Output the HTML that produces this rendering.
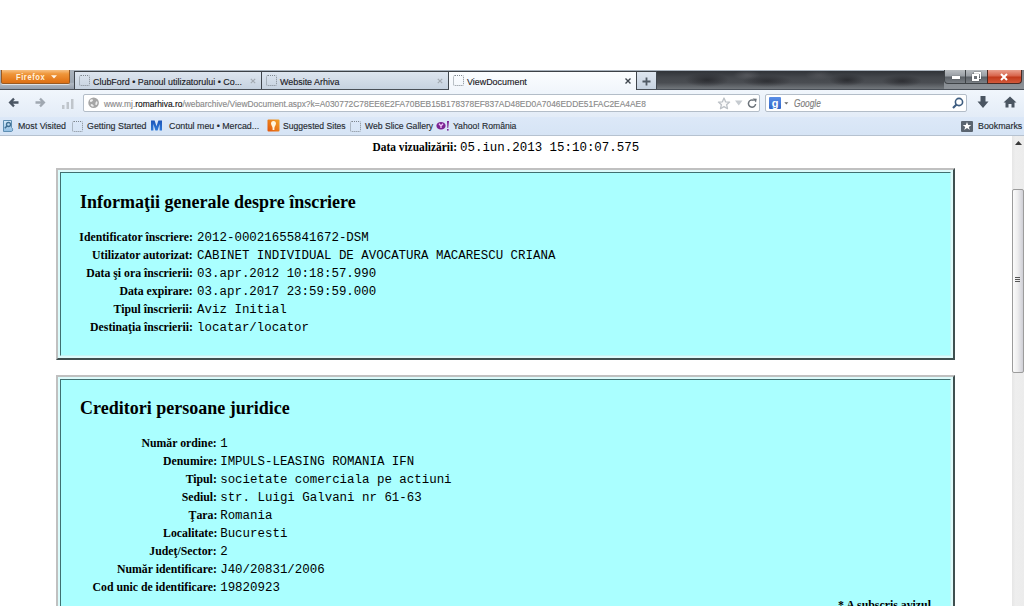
<!DOCTYPE html>
<html><head><meta charset="utf-8">
<style>
*{margin:0;padding:0;box-sizing:border-box}
html,body{width:1024px;height:606px;overflow:hidden;background:#fff;font-family:"Liberation Sans",sans-serif}
.abs{position:absolute}
#chrome{position:absolute;left:0;top:0;width:1024px;height:137px}
#tabbar{position:absolute;left:0;top:70px;width:1024px;height:20px;background:linear-gradient(#aab3bd,#9ba5b1 65%,#b0b9c3 72%,#939dab);border-bottom:1px solid #4a5058}
#ffbtn{position:absolute;left:1px;top:0;width:69px;height:14px;background:linear-gradient(#f7c184,#ef963a 30%,#e57c1f 75%,#dc7016);border:1px solid #9a5a22;border-top:none;border-radius:0 0 2px 2px;color:#fff5e8;font-weight:bold;line-height:13px;box-shadow:0 1px 0 rgba(255,255,255,.6)}
.sx{display:inline-block;transform:scaleX(.93);transform-origin:0 0;white-space:nowrap;-webkit-text-stroke:.15px currentColor}
.tab{position:absolute;top:1px;height:18px;background:linear-gradient(#dde5ef,#c6d2e0);border-top:1px solid #3c4147;border-right:1px solid #3f454c;font-size:9.6px;color:#1c2025;line-height:16px;white-space:nowrap;overflow:hidden}
.tab.act{background:linear-gradient(#fbfdff,#f1f6fb);height:20px}
.tab .ic{position:absolute;left:4px;top:3px;width:11px;height:11px;border:1px dotted #7f878f;border-radius:2px}
.tab .tx{position:absolute;left:18px;top:2px}
.tab .xx{position:absolute;right:4.6px;top:6.3px}
#dark{position:absolute;left:657px;top:1px;width:367px;height:18px;background:radial-gradient(ellipse 22px 7px at 50px 9px,rgba(20,20,24,.55),transparent),radial-gradient(ellipse 25px 6px at 110px 10px,rgba(20,20,24,.5),transparent),radial-gradient(ellipse 18px 6px at 190px 9px,rgba(20,20,24,.55),transparent),radial-gradient(ellipse 20px 6px at 245px 10px,rgba(20,20,24,.5),transparent),radial-gradient(ellipse 14px 5px at 90px 4px,rgba(130,130,135,.35),transparent),radial-gradient(ellipse 14px 5px at 162px 4px,rgba(120,120,125,.3),transparent),linear-gradient(#303338,#44474c 35%,#4a4d52 65%,#72777c),#45484d}
#winctl{position:absolute;left:944px;top:0;width:80px;height:19px;background:linear-gradient(#7d8288,#8d9298)}
.wb{position:absolute;top:0;height:14px;background:linear-gradient(#b8bcc0,#9a9fa5 45%,#5d6268 55%,#7a7f85);border:1px solid #3f4347;border-top:none}
.wb:first-child{border-radius:0 0 0 4px}
#close{position:absolute;left:43px;top:0;width:35px;height:14px;background:linear-gradient(#eaa08e,#d8654c 45%,#c23a1c 55%,#d4593a);border:1px solid #4a2a24;border-top:none;border-radius:0 0 4px 0}
#nav{position:absolute;left:0;top:90px;width:1024px;height:27px;background:linear-gradient(#f1f6fc,#e3ecf7)}
#bm{position:absolute;left:0;top:117px;width:1024px;height:19px;background:linear-gradient(#dce8f8,#d6e4f5);border-bottom:1px solid #b6c2d0;font-size:9.6px;color:#262b31;line-height:18px;white-space:nowrap}
#url{position:absolute;left:83px;top:4px;width:677px;height:18px;background:#fff;border:1px solid #b3bdc8;border-radius:2px;font-size:9.6px;color:#8a8a8a;line-height:16px;overflow:hidden}
#search{position:absolute;left:765px;top:4px;width:202px;height:18px;background:#fff;border:1px solid #b3bdc8;border-radius:2px;font-size:9.6px;color:#888;line-height:16px}
#content{position:absolute;left:0;top:136px;width:1012px;height:470px;background:#fff;overflow:hidden}
#sb{position:absolute;left:1012px;top:136px;width:12px;height:470px;background:linear-gradient(90deg,#e6e6e6,#eeeeee 30%,#ececec)}
#thumb{position:absolute;left:0;top:53px;width:12px;height:184px;border:1px solid #9c9c9c;border-radius:2px;background:linear-gradient(90deg,#fbfbfb,#eeeeef 45%,#cfcfd6)}
.serif{font-family:"Liberation Serif",serif}
.mono{font-family:"Liberation Mono",monospace}
.box{position:absolute;left:56px;width:899px;background:#dcfbfb;border:2px solid;border-color:#c0c0c0 #3f4f4f #3f4f4f #c0c0c0}
.cell{position:absolute;left:2px;top:2px;right:2px;bottom:2px;background:#aaffff;border:1px solid;border-color:#3f7070 #c4f6f6 #c4f6f6 #3f7070}
h2{position:absolute;font-family:"Liberation Serif",serif;font-weight:bold;font-size:18px;color:#000;white-space:nowrap}
.row{position:absolute;left:0;width:1007px;white-space:nowrap;height:18px;line-height:18px}
.lab{position:absolute;top:0;font-family:"Liberation Serif",serif;font-weight:bold;font-size:12px;color:#000;text-align:right;transform:scaleX(.98);transform-origin:100% 50%}
.val{position:absolute;top:1px;font-family:"Liberation Mono",monospace;font-size:12.45px;color:#000}
</style></head><body>
<div id="chrome">
  <div id="tabbar">
    <div id="ffbtn"><span class="sx" style="position:absolute;left:13.7px;top:0;font-size:9.5px;letter-spacing:.7px;transform:scaleX(.8);-webkit-text-stroke:0;color:#fff2df">Firefox</span><svg class="abs" style="left:49px;top:5px" width="6" height="4"><path d="M0 0.3H6L3 3.6Z" fill="#fff6ea"/></svg></div>
    <div class="tab" style="left:74px;width:188px;border-left:1px solid #3f454c"><div class="ic"></div><div class="tx sx">ClubFord • Panoul utilizatorului • Co...</div><svg class="xx" width="6" height="6"><path d="M0.8 0.8L5.2 5.2M5.2 0.8L0.8 5.2" stroke="#a3aab2" stroke-width="1.2"/></svg></div>
    <div class="tab" style="left:262px;width:187px"><div class="ic"></div><div class="tx sx">Website Arhiva</div><svg class="xx" width="6" height="6"><path d="M0.8 0.8L5.2 5.2M5.2 0.8L0.8 5.2" stroke="#a3aab2" stroke-width="1.2"/></svg></div>
    <div class="tab act" style="left:449px;width:188px"><div class="ic"></div><div class="tx sx">ViewDocument</div><svg class="xx" width="6" height="6"><path d="M0.5 0.5L5.5 5.5M5.5 0.5L0.5 5.5" stroke="#3e464e" stroke-width="1.4"/></svg></div>
    <div class="tab" style="left:637px;width:20px;height:18px"><svg class="abs" style="left:5px;top:5px" width="9" height="9"><path d="M4.5 0.5V8.5M0.5 4.5H8.5" stroke="#505a65" stroke-width="1.8"/></svg></div>
    <div id="dark"></div>
    <div id="winctl">
      <div class="wb" style="left:0;width:22px;border-radius:0 0 0 4px"><div class="abs" style="left:7px;top:6px;width:8px;height:3px;background:#fff;box-shadow:0 0 1px #333"></div></div>
      <div class="wb" style="left:21px;width:23px"><div class="abs" style="left:8px;top:2px;width:7px;height:7px;border:1px solid #fff;border-top-width:2px;box-shadow:0 0 1px #333"></div><div class="abs" style="left:6px;top:4px;width:7px;height:7px;border:2px solid #fff;background:#6f747a;box-shadow:0 0 1px #333"></div></div>
      <div id="close"><svg class="abs" style="left:12px;top:3px" width="8" height="8"><path d="M1 1L7 7M7 1L1 7" stroke="#fff" stroke-width="2"/></svg></div>
    </div>
  </div>
  <div id="nav">
    <svg class="abs" style="left:8px;top:7px" width="11" height="11"><path d="M0.5 5.5L5.2 0.8L6.8 2.4L5 4.2H10.5V6.8H5L6.8 8.6L5.2 10.2Z" fill="#4b5663"/></svg>
    <svg class="abs" style="left:35px;top:7px" width="11" height="11"><path d="M10.5 5.5L5.8 0.8L4.2 2.4L6 4.2H0.5V6.8H6L4.2 8.6L5.8 10.2Z" fill="#a0a8b1"/></svg>
    <svg class="abs" style="left:62px;top:8px" width="12" height="11"><rect x="0" y="7" width="2.5" height="4" fill="#bfc5cb"/><rect x="4.5" y="4" width="2.5" height="7" fill="#bfc5cb"/><rect x="9" y="1" width="2.5" height="10" fill="#bfc5cb"/></svg>
    <div id="url">
      <svg class="abs" style="left:4px;top:1.5px" width="12" height="12"><circle cx="5.6" cy="5.8" r="5.3" fill="#a6a6a6"/><ellipse cx="3.4" cy="3.6" rx="1.7" ry="1.2" transform="rotate(-35 3.4 3.6)" fill="#f2f2f2"/><ellipse cx="8.4" cy="6.2" rx="1" ry="1.9" transform="rotate(15 8.4 6.2)" fill="#ececec"/><ellipse cx="4.2" cy="8.4" rx="1.7" ry="1.1" transform="rotate(30 4.2 8.4)" fill="#ececec"/></svg>
      <span class="abs sx" style="left:20px;top:1px;transform:scaleX(.875)">www.mj.<span style="color:#111">romarhiva.ro</span>/webarchive/ViewDocument.aspx?k=A030772C78EE6E2FA70BEB15B178378EF837AD48ED0A7046EDDE51FAC2EA4AE8</span>
      <svg class="abs" style="left:633px;top:2px" width="14" height="13"><path d="M7 1L8.6 4.8L12.6 5.1L9.6 7.7L10.5 11.7L7 9.6L3.5 11.7L4.4 7.7L1.4 5.1L5.4 4.8Z" fill="#fafafa" stroke="#bcc1c6" stroke-width="1.3" stroke-linejoin="round"/></svg>
      <svg class="abs" style="left:651px;top:5px" width="8" height="6"><path d="M0 0.5H7.5L3.75 5.5Z" fill="#c6cbd0"/></svg>
      <svg class="abs" style="left:663px;top:3px" width="11" height="11"><path d="M8.6 6A3.6 3.6 0 1 1 6.8 2.4" stroke="#6b7279" stroke-width="1.5" fill="none"/><path d="M5.6 0.4L9.8 0.8L9 4.6Z" fill="#6b7279"/></svg>
    </div>
    <div id="search">
      <div class="abs" style="left:3px;top:2px;width:12px;height:12px;background:linear-gradient(#5a8ee6,#2f66c8);border-radius:1px;color:#fff;font-size:11px;line-height:12px;text-align:center;font-weight:bold">g</div>
      <svg class="abs" style="left:18px;top:7px" width="5" height="3"><path d="M0.3 0.3H4.3L2.3 2.6Z" fill="#666"/></svg>
      <span class="abs sx" style="left:27.5px;top:0.5px;font-style:italic;color:#7d7d7d;font-size:10.4px;transform:scaleX(.8)">Google</span>
      <svg class="abs" style="left:186px;top:2px" width="12" height="12"><circle cx="7" cy="5" r="3.6" stroke="#3e5d80" stroke-width="1.6" fill="none"/><path d="M4.5 7.5L1 11" stroke="#3e5d80" stroke-width="2.2"/></svg>
    </div>
    <svg class="abs" style="left:977px;top:6px" width="12" height="13"><path d="M3.5 0H8.5V5.5H11.5L6 12L0.5 5.5H3.5Z" fill="#4a5561"/></svg>
    <svg class="abs" style="left:1003px;top:6px" width="14" height="12"><path d="M7 0.5L13.5 6.5H11.5V11.5H8.5V8H5.5V11.5H2.5V6.5H0.5Z" fill="#4a5561"/></svg>
  </div>
  <div id="bm">
    <svg class="abs" style="left:2px;top:2px" width="12" height="14"><defs><linearGradient id="mvg" x1="0" y1="0" x2="0" y2="1"><stop offset="0" stop-color="#d8ecfb"/><stop offset="1" stop-color="#8fbde2"/></linearGradient></defs><path d="M1.5 1.5H9.5V8.5C11 9 11 12.5 9.5 12.5H1.5Z" fill="url(#mvg)" stroke="#5f8fb3" stroke-width="1"/><circle cx="6.5" cy="5.5" r="2" fill="none" stroke="#3f6f93" stroke-width="1.3"/><path d="M5 7L2.8 9.2" stroke="#3f6f93" stroke-width="1.5"/></svg>
    <span class="abs sx" style="transform:scaleX(.922);left:18px">Most Visited</span>
    <div class="abs" style="left:72px;top:4px;width:11px;height:11px;border:1px dotted #7f878f;border-radius:2px"></div>
    <span class="abs sx" style="transform:scaleX(.922);left:87px">Getting Started</span>
    <svg class="abs" style="left:150px;top:3px" width="13" height="11"><defs><linearGradient id="mg" x1="0" y1="0" x2="0" y2="1"><stop offset="0" stop-color="#1d55b8"/><stop offset="1" stop-color="#2f7ad8"/></linearGradient></defs><path d="M1 10.5V0.5H4.6L6.5 6.2L8.4 0.5H12V10.5H9.6V4L7.6 10.5H5.4L3.4 4V10.5Z" fill="url(#mg)"/></svg>
    <span class="abs sx" style="transform:scaleX(.922);left:169px">Contul meu • Mercad...</span>
    <svg class="abs" style="left:267px;top:2px" width="13" height="13"><defs><linearGradient id="og" x1="0" y1="1" x2="1" y2="0"><stop offset="0" stop-color="#e2540c"/><stop offset="1" stop-color="#f2a52a"/></linearGradient></defs><rect x="0.5" y="0.5" width="12" height="12" rx="1" fill="url(#og)"/><path d="M6.5 2C8.3 2 9 3.4 9 4.6C9 6.2 7.6 7.2 7.4 9V11H5.6V9C5.4 7.2 4 6.2 4 4.6C4 3.4 4.7 2 6.5 2Z" fill="#fff6de"/></svg>
    <span class="abs sx" style="transform:scaleX(.896);left:283px">Suggested Sites</span>
    <div class="abs" style="left:350px;top:4px;width:11px;height:11px;border:1px dotted #7f878f;border-radius:2px"></div>
    <span class="abs sx" style="transform:scaleX(.896);left:365px">Web Slice Gallery</span>
    <svg class="abs" style="left:436px;top:3px" width="14" height="11"><ellipse cx="5" cy="5.8" rx="4.6" ry="3.8" fill="#7b2393"/><path d="M3 3.8L5 6L7 3.8M5 6V8" stroke="#f0c8f8" stroke-width="1.3" fill="none"/><path d="M11 1L13 1L12.2 8H11.4Z" fill="#7b2393"/><rect x="11" y="9" width="1.6" height="1.6" fill="#7b2393"/></svg>
    <span class="abs sx" style="transform:scaleX(.896);left:453px">Yahoo! România</span>
    <div class="abs" style="left:961px;top:4px;width:12px;height:11px;background:#5a6470;border-radius:1px"><svg class="abs" style="left:1px;top:0" width="10" height="10"><path d="M5 1L6.2 4H9.3L6.8 5.9L7.8 9L5 7.1L2.2 9L3.2 5.9L0.7 4H3.8Z" fill="#fff"/></svg></div>
    <span class="abs sx" style="transform:scaleX(.922);left:978px">Bookmarks</span>
  </div>
</div>
<div id="content">
  <div class="row" style="top:2px"><span class="lab" style="right:550.5px;transform:scaleX(.95)">Data vizualizării:</span><span class="val" style="left:460px">05.iun.2013 15:10:07.575</span></div>
  <div class="box" style="top:32px;height:192px"><div class="cell"></div>
    <h2 style="left:22px;top:22.4px">Informaţii generale despre înscriere</h2>
  </div>
  <div class="box" style="top:239px;height:300px"><div class="cell"></div>
    <h2 style="left:22px;top:21.4px">Creditori persoane juridice</h2>
  </div>
<div class="row" style="top:92px"><span class="lab" style="right:814.3px">Identificator înscriere:</span><span class="val" style="left:197.1px">2012-00021655841672-DSM</span></div>
<div class="row" style="top:110px"><span class="lab" style="right:814.3px">Utilizator autorizat:</span><span class="val" style="left:197.1px">CABINET INDIVIDUAL DE AVOCATURA MACARESCU CRIANA</span></div>
<div class="row" style="top:128px"><span class="lab" style="right:814.3px">Data şi ora înscrierii:</span><span class="val" style="left:197.1px">03.apr.2012 10:18:57.990</span></div>
<div class="row" style="top:146px"><span class="lab" style="right:814.3px">Data expirare:</span><span class="val" style="left:197.1px">03.apr.2017 23:59:59.000</span></div>
<div class="row" style="top:164px"><span class="lab" style="right:814.3px">Tipul înscrierii:</span><span class="val" style="left:197.1px">Aviz Initial</span></div>
<div class="row" style="top:182px"><span class="lab" style="right:814.3px">Destinaţia înscrierii:</span><span class="val" style="left:197.1px">locatar/locator</span></div>
<div class="row" style="top:298.4px"><span class="lab" style="right:790px">Număr ordine:</span><span class="val" style="left:220.2px">1</span></div>
<div class="row" style="top:316.4px"><span class="lab" style="right:790px">Denumire:</span><span class="val" style="left:220.2px">IMPULS-LEASING ROMANIA IFN</span></div>
<div class="row" style="top:334.4px"><span class="lab" style="right:790px">Tipul:</span><span class="val" style="left:220.2px">societate comerciala pe actiuni</span></div>
<div class="row" style="top:352.4px"><span class="lab" style="right:790px">Sediul:</span><span class="val" style="left:220.2px">str. Luigi Galvani nr 61-63</span></div>
<div class="row" style="top:370.4px"><span class="lab" style="right:790px">Ţara:</span><span class="val" style="left:220.2px">Romania</span></div>
<div class="row" style="top:388.4px"><span class="lab" style="right:790px">Localitate:</span><span class="val" style="left:220.2px">Bucuresti</span></div>
<div class="row" style="top:406.4px"><span class="lab" style="right:790px">Judeţ/Sector:</span><span class="val" style="left:220.2px">2</span></div>
<div class="row" style="top:424.4px"><span class="lab" style="right:790px">Număr identificare:</span><span class="val" style="left:220.2px">J40/20831/2006</span></div>
<div class="row" style="top:442.4px"><span class="lab" style="right:790px">Cod unic de identificare:</span><span class="val" style="left:220.2px">19820923</span></div>
  <div class="row" style="top:460px"><span class="lab" style="left:837.5px;text-align:left;font-size:12px;transform:scaleX(.985);transform-origin:0 50%">* A subscris avizul</span></div>
</div>
<div id="sb"><svg class="abs" style="left:3px;top:5px" width="7" height="4"><path d="M0 4L3.5 0L7 4Z" fill="#3a3a3a"/></svg><div id="thumb"><div class="abs" style="left:2px;top:87px;width:5px;height:1px;background:#555;box-shadow:0 2px 0 #555,0 4px 0 #555"></div></div></div>

</body></html>
